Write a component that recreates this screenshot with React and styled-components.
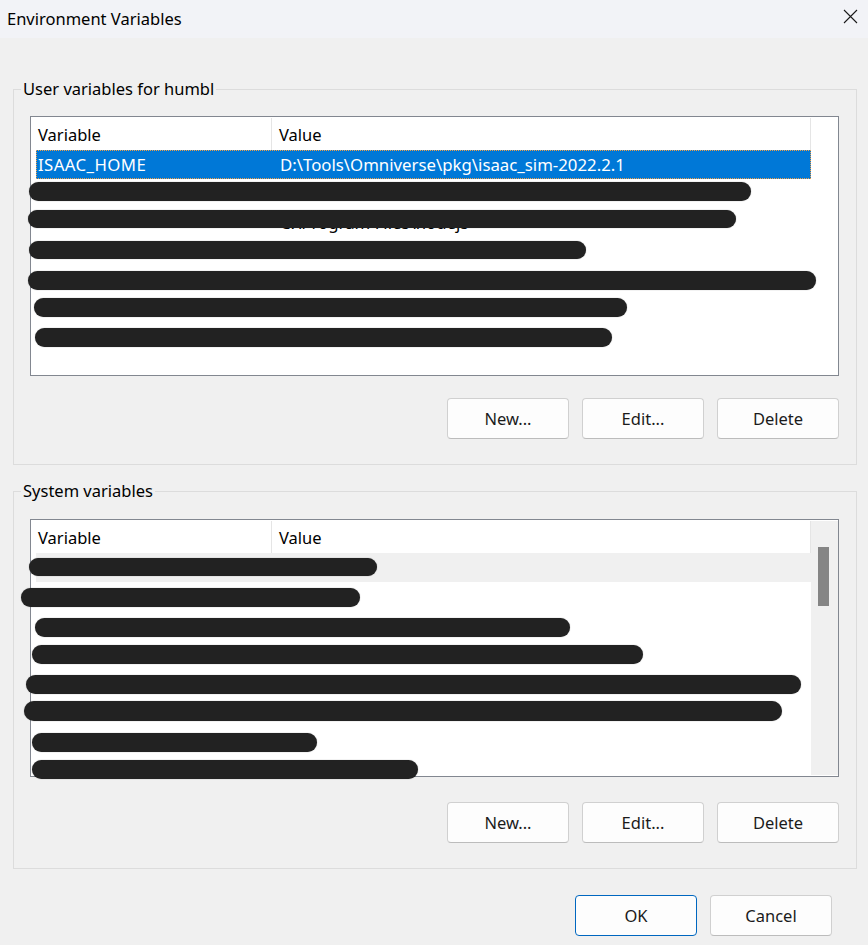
import React from "react";
import styled, { createGlobalStyle } from "styled-components";

const GlobalStyle = createGlobalStyle`
  html, body {
    margin: 0;
    padding: 0;
    background: #f0f0f0;
  }
  body {
    font-family: "Noto Sans", "Open Sans", Arial, sans-serif;
    color: #000;
  }
`;

const Window = styled.div`
  width: 868px;
  height: 945px;
  background: #f0f0f0;
  overflow: hidden;
`;

const TitleBar = styled.div`
  height: 38px;
  background: #f2f3f7;
  display: flex;
  align-items: center;
  justify-content: space-between;
  padding: 0 10px 0 7px;
  box-sizing: border-box;
  & > span {
    font-size: 16.5px;
    color: #000;
    margin-top: -2px;
  }
`;

const CloseIcon = styled.svg`
  width: 15px;
  height: 15px;
  margin-top: -6px;
`;

const Body = styled.div`
  padding: 51px 11px 0 13px;
`;

const Group = styled.div`
  position: relative;
  border: 1px solid #dcdcdc;
  padding: ${(p) => p.$top}px 17px ${(p) => p.$bottom}px 16px;
  margin-bottom: 26px;
`;

const GroupLabel = styled.span`
  position: absolute;
  top: -12px;
  left: 7px;
  padding: 0 2px;
  background: #f0f0f0;
  font-size: 16.5px;
  line-height: 22px;
  color: #000;
`;

const ListBox = styled.div`
  position: relative;
  height: ${(p) => p.$height}px;
  box-sizing: border-box;
  border: 1px solid #828790;
  background: #fff;
  display: grid;
  grid-template-columns: 1fr 27px;
`;

const Main = styled.div`
  overflow: hidden;
`;

const Header = styled.div`
  display: flex;
  height: 32px;
  margin-top: 1px;
  font-size: 16.5px;
`;

const HeaderCell = styled.div`
  box-sizing: border-box;
  width: ${(p) => (p.$w ? `${p.$w}px` : "auto")};
  flex: ${(p) => (p.$w ? "none" : 1)};
  padding-left: 7px;
  display: flex;
  align-items: center;
  border-right: 1px solid #e5e5e5;
`;

const Rows = styled.div`
  padding-left: 5px;
`;

const Row = styled.div`
  display: flex;
  height: 29px;
  box-sizing: border-box;
  align-items: center;
  font-size: 16.8px;
  white-space: nowrap;
  background: ${(p) => (p.$selected ? "#0078d7" : p.$hover ? "#f0f0f0" : "transparent")};
  color: ${(p) => (p.$selected ? "#fff" : "#000")};
  border: 1px dotted ${(p) => (p.$selected ? "#f0a048" : "transparent")};
  & > span:first-child {
    width: 242px;
    padding-left: 1px;
    flex: none;
    letter-spacing: 0.4px;
  }
`;

const ScrollTrack = styled.div`
  background: ${(p) => (p.$visible ? "#f0f0f0" : "#fff")};
  margin: 1px 0 1px 0;
  position: relative;
`;

const ScrollThumb = styled.div`
  width: 11px;
  height: 59px;
  margin: 26px 0 0 7px;
  background: #858585;
`;

const Redaction = styled.span`
  position: absolute;
  height: 19px;
  border-radius: 10px;
  background: #222;
  box-shadow: 0 0 1px rgba(0, 0, 0, 0.5);
`;

const ButtonRow = styled.div`
  display: flex;
  justify-content: flex-end;
  gap: 13px;
  margin-top: ${(p) => p.$top}px;
  margin-right: ${(p) => p.$right || 0}px;
`;

const Button = styled.button`
  width: 122px;
  height: 41px;
  box-sizing: border-box;
  background: #fdfdfd;
  border: 1px solid ${(p) => (p.$primary ? "#0067c0" : "#d0d0d0")};
  border-bottom-color: ${(p) => (p.$primary ? "#0067c0" : "#bcbcbc")};
  border-radius: 4px;
  font-family: "Noto Sans", "Open Sans", Arial, sans-serif;
  font-size: 16.5px;
  color: #1b1b1b;
  padding: 0;
`;

const userBars = [
  [-2, 65, 722, 19],
  [-3, 93, 708, 18],
  [-2, 124, 557, 18],
  [-3, 154, 788, 19],
  [3, 181, 593, 19],
  [4, 211, 577, 19],
];

const systemBars = [
  [-2, 38, 348, 18],
  [-10, 68, 339, 19],
  [4, 98, 535, 19],
  [1, 125, 611, 19],
  [-5, 155, 775, 19],
  [-7, 181, 758, 20],
  [1, 213, 285, 19],
  [1, 240, 386, 19],
];

function VarList({ height, rows, bars, scroll }) {
  return (
    <ListBox $height={height}>
      <Main>
        <Header>
          <HeaderCell $w={241}>Variable</HeaderCell>
          <HeaderCell>Value</HeaderCell>
        </Header>
        <Rows>
          {rows.map((r, i) => (
            <Row key={i} $selected={r.selected} $hover={r.hover}>
              <span>{r.name}</span>
              <span>{r.value}</span>
            </Row>
          ))}
        </Rows>
      </Main>
      <ScrollTrack $visible={scroll}>{scroll && <ScrollThumb />}</ScrollTrack>
      {bars.map(([x, y, w, h], i) => (
        <Redaction key={i} style={{ left: x, top: y, width: w, height: h }} />
      ))}
    </ListBox>
  );
}

const userRows = [
  { name: "ISAAC_HOME", value: "D:\\Tools\\Omniverse\\pkg\\isaac_sim-2022.2.1", selected: true },
  { name: "", value: "" },
  { name: "", value: "C:\\Program Files\\nodejs" },
  { name: "", value: "" },
  { name: "", value: "" },
  { name: "", value: "" },
  { name: "", value: "" },
];

const systemRows = [
  { name: "", value: "", hover: true },
  { name: "", value: "" },
  { name: "", value: "" },
  { name: "", value: "" },
  { name: "", value: "" },
  { name: "", value: "" },
  { name: "", value: "" },
  { name: "", value: "" },
];

export default function App() {
  return (
    <Window>
      <GlobalStyle />
      <TitleBar>
        <span>Environment Variables</span>
        <CloseIcon viewBox="0 0 15 15">
          <path d="M1 1 L14 14 M14 1 L1 14" stroke="#1a1a1a" strokeWidth="1.1" fill="none" />
        </CloseIcon>
      </TitleBar>
      <Body>
        <Group $top={26} $bottom={25}>
          <GroupLabel>User variables for humbl</GroupLabel>
          <VarList height={260} rows={userRows} bars={userBars} />
          <ButtonRow $top={22}>
            <Button>New...</Button>
            <Button>Edit...</Button>
            <Button>Delete</Button>
          </ButtonRow>
        </Group>
        <Group $top={27} $bottom={25}>
          <GroupLabel>System variables</GroupLabel>
          <VarList height={258} rows={systemRows} bars={systemBars} scroll />
          <ButtonRow $top={25}>
            <Button>New...</Button>
            <Button>Edit...</Button>
            <Button>Delete</Button>
          </ButtonRow>
        </Group>
        <ButtonRow $top={0} $right={25}>
          <Button $primary>OK</Button>
          <Button>Cancel</Button>
        </ButtonRow>
      </Body>
    </Window>
  );
}
